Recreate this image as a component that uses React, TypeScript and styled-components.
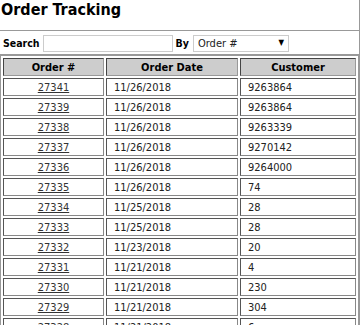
import React, { useState } from 'react'
import styled, { createGlobalStyle } from 'styled-components'

// ── global ──────────────────────────────────────────────
const GlobalStyle = createGlobalStyle`
  html, body { margin: 0; padding: 0; background: #fff; }
  body {
    font-family: "DejaVu Sans Condensed", "DejaVu Sans", Tahoma, sans-serif;
    font-size: 11px;
    color: #111;
  }
`

// ── shell ──────────────────────────────────────────────
const Page = styled.div`
  width: 359px;
  border-right: 1px solid #999;
  overflow: hidden;
`

const TitleBar = styled.h1`
  box-sizing: border-box;
  height: 31px;
  margin: 0;
  padding: 0 0 0 1px;
  font-size: 16px;
  line-height: 20px;
  font-weight: bold;
  color: #000;
  border-bottom: 1px solid #999;
`

// ── search row ─────────────────────────────────────────
const SearchBar = styled.div`
  box-sizing: border-box;
  height: 24px;
  display: flex;
  align-items: center;
  padding: 1px 0 0 3px;
  border-bottom: 1px solid #999;
`

const Label = styled.label<{ $gap?: number }>`
  font-weight: bold;
  font-size: 10.5px;
  color: #000;
  margin-left: ${({ $gap }) => $gap ?? 0}px;
`

const SearchInput = styled.input`
  box-sizing: border-box;
  width: 130px;
  height: 17px;
  margin: 0 0 0 3px;
  padding: 0 3px;
  border: 1px solid #ccc;
  font: inherit;
  outline: none;
`

const SelectWrap = styled.div`
  position: relative;
  margin-left: 4px;
`

const Select = styled.select`
  box-sizing: border-box;
  width: 96px;
  height: 17px;
  padding: 0 0 0 4px;
  border: 1px solid #ccc;
  border-radius: 0;
  background: #fff;
  appearance: none;
  font: inherit;
  font-size: 11px;
  color: #222;
  outline: none;
`

const Caret = styled.span`
  position: absolute;
  right: 5px;
  top: 3px;
  font-size: 8px;
  color: #000;
  pointer-events: none;
`

// ── table ──────────────────────────────────────────────
const Grid = styled.table`
  width: 359px;
  table-layout: fixed;
  border-collapse: separate;
  border-spacing: 2px;
  border: 1px solid #999;
  margin-top: 0;
`

const HeadCell = styled.th<{ $w: number }>`
  box-sizing: border-box;
  width: ${({ $w }) => $w}px;
  height: 18px;
  padding: 0;
  background: #cdcdcd;
  border: 1px solid;
  border-color: #444 #999 #999 #444;
  font-size: 11px;
  font-weight: bold;
  color: #000;
  text-align: center;
`

const Cell = styled.td<{ $center?: boolean }>`
  box-sizing: border-box;
  height: 18px;
  padding: 0 0 0 ${({ $center }) => ($center ? 0 : 7)}px;
  border: 1px solid;
  border-color: #555 #888 #888 #555;
  text-align: ${({ $center }) => ($center ? 'center' : 'left')};
  white-space: nowrap;
  overflow: hidden;
  color: #222;
`

const OrderLink = styled.a`
  color: #333;
  text-decoration: underline;
`

const orders = [
  { id: '27341', date: '11/26/2018', customer: '9263864' },
  { id: '27339', date: '11/26/2018', customer: '9263864' },
  { id: '27338', date: '11/26/2018', customer: '9263339' },
  { id: '27337', date: '11/26/2018', customer: '9270142' },
  { id: '27336', date: '11/26/2018', customer: '9264000' },
  { id: '27335', date: '11/26/2018', customer: '74' },
  { id: '27334', date: '11/25/2018', customer: '28' },
  { id: '27333', date: '11/25/2018', customer: '28' },
  { id: '27332', date: '11/23/2018', customer: '20' },
  { id: '27331', date: '11/21/2018', customer: '4' },
  { id: '27330', date: '11/21/2018', customer: '230' },
  { id: '27329', date: '11/21/2018', customer: '304' },
  { id: '27328', date: '11/21/2018', customer: '6' },
  { id: '27327', date: '11/20/2018', customer: '112' },
]

export default function App() {
  const [query, setQuery] = useState('')
  const [by, setBy] = useState('order')

  return (
    <>
      <GlobalStyle />
      <Page>
        <TitleBar>Order Tracking</TitleBar>

        <SearchBar>
          <Label htmlFor="q">Search</Label>
          <SearchInput id="q" value={query} onChange={e => setQuery(e.target.value)} />
          <Label htmlFor="by" $gap={3}>By</Label>
          <SelectWrap>
            <Select id="by" value={by} onChange={e => setBy(e.target.value)}>
              <option value="order">Order #</option>
              <option value="date">Order Date</option>
              <option value="customer">Customer</option>
            </Select>
            <Caret>▼</Caret>
          </SelectWrap>
        </SearchBar>

        <Grid>
          <thead>
            <tr>
              <HeadCell $w={101}>Order #</HeadCell>
              <HeadCell $w={132}>Order Date</HeadCell>
              <HeadCell $w={116}>Customer</HeadCell>
            </tr>
          </thead>
          <tbody>
            {orders.map(o => (
              <tr key={o.id}>
                <Cell $center><OrderLink href="#">{o.id}</OrderLink></Cell>
                <Cell>{o.date}</Cell>
                <Cell>{o.customer}</Cell>
              </tr>
            ))}
          </tbody>
        </Grid>
      </Page>
    </>
  )
}
